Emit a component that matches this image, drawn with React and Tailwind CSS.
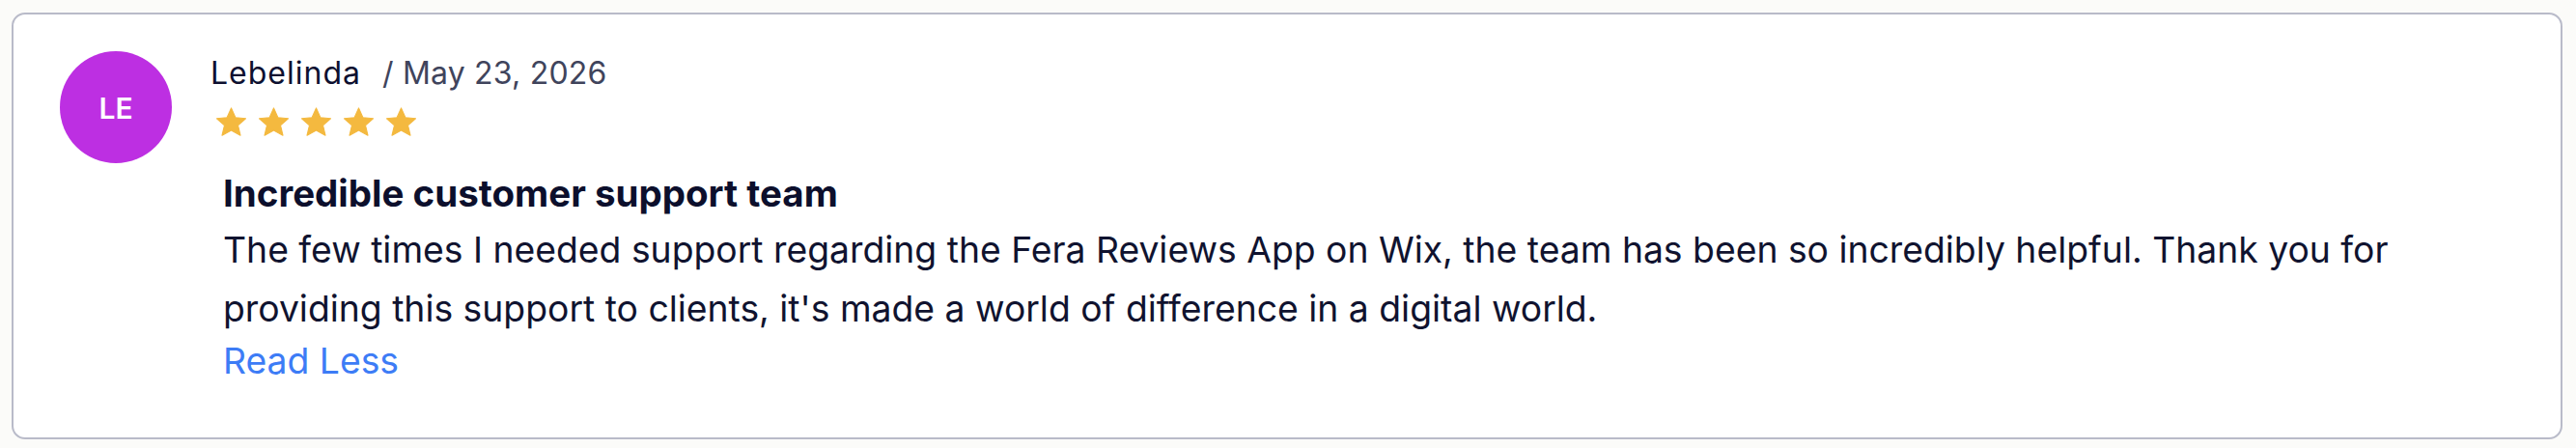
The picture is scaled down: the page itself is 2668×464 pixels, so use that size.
import React from 'react';

const review = {
    initials: 'LE',
    name: 'Lebelinda',
    date: 'May 23, 2026',
    rating: 5,
    title: 'Incredible customer support team',
    body: "The few times I needed support regarding the Fera Reviews App on Wix, the team has been so incredibly helpful. Thank you for providing this support to clients, it's made a world of difference in a digital world.",
};

const Star = () => (
    <svg viewBox="0 0 24 24" className="w-[33px] h-[33px]" fill="#f4b93f">
        <path d="M12 1.4l3.2 7.1 7.7.8-5.8 5.1 1.8 7.6L12 18.2l-6.9 3.8 1.8-7.6L1.1 9.3l7.7-.8z" strokeLinejoin="round" stroke="#f4b93f" strokeWidth="0.8" />
    </svg>
);

const ReviewCard = ({ review }) => {
    return (
        <div className="h-[442px] bg-white border-[2.5px] border-[#b9bbc9] rounded-[14px] pl-[48px] pt-[38px] flex">
            {/* avatar with initials */}
            <div className="w-[116px] h-[116px] shrink-0 rounded-full bg-[#bd2fe2] flex items-center justify-center text-white text-[30px] font-semibold pt-[3px]">
                {review.initials}
            </div>

            <div className="ml-[40px] flex-1">
                <div className="flex items-baseline text-[32px] leading-[40px] mt-[3px] tracking-[1px]">
                    <span className="text-[#0d1030]">{review.name}</span>
                    <span className="ml-[22px] text-[#40445c] tracking-[0.2px]">/ {review.date}</span>
                </div>
                <div className="flex gap-[11px] ml-[5px] mt-[14px]">
                    {Array.from({ length: review.rating }).map((_, i) => (
                        <Star key={i} />
                    ))}
                </div>

                <div className="pl-[13px] mt-[34px] pr-[40px]">
                    <h3 className="text-[38.5px] leading-[46px] font-bold text-[#0c0f2c]">{review.title}</h3>
                    <p className="text-[37.3px] leading-[61px] text-[#10132f] mt-[5px]">{review.body}</p>
                    <button className="text-[37.3px] leading-[44px] text-[#3d7cf6] mt-[2px]">Read Less</button>
                </div>
            </div>
        </div>
    );
};

export default function App() {
    return (
        <div className="w-full h-[464px] bg-[#fbfbf9] pl-[12px] pr-[14px] pt-[13px] font-['Inter',sans-serif]">
            <ReviewCard review={review} />
        </div>
    );
}
